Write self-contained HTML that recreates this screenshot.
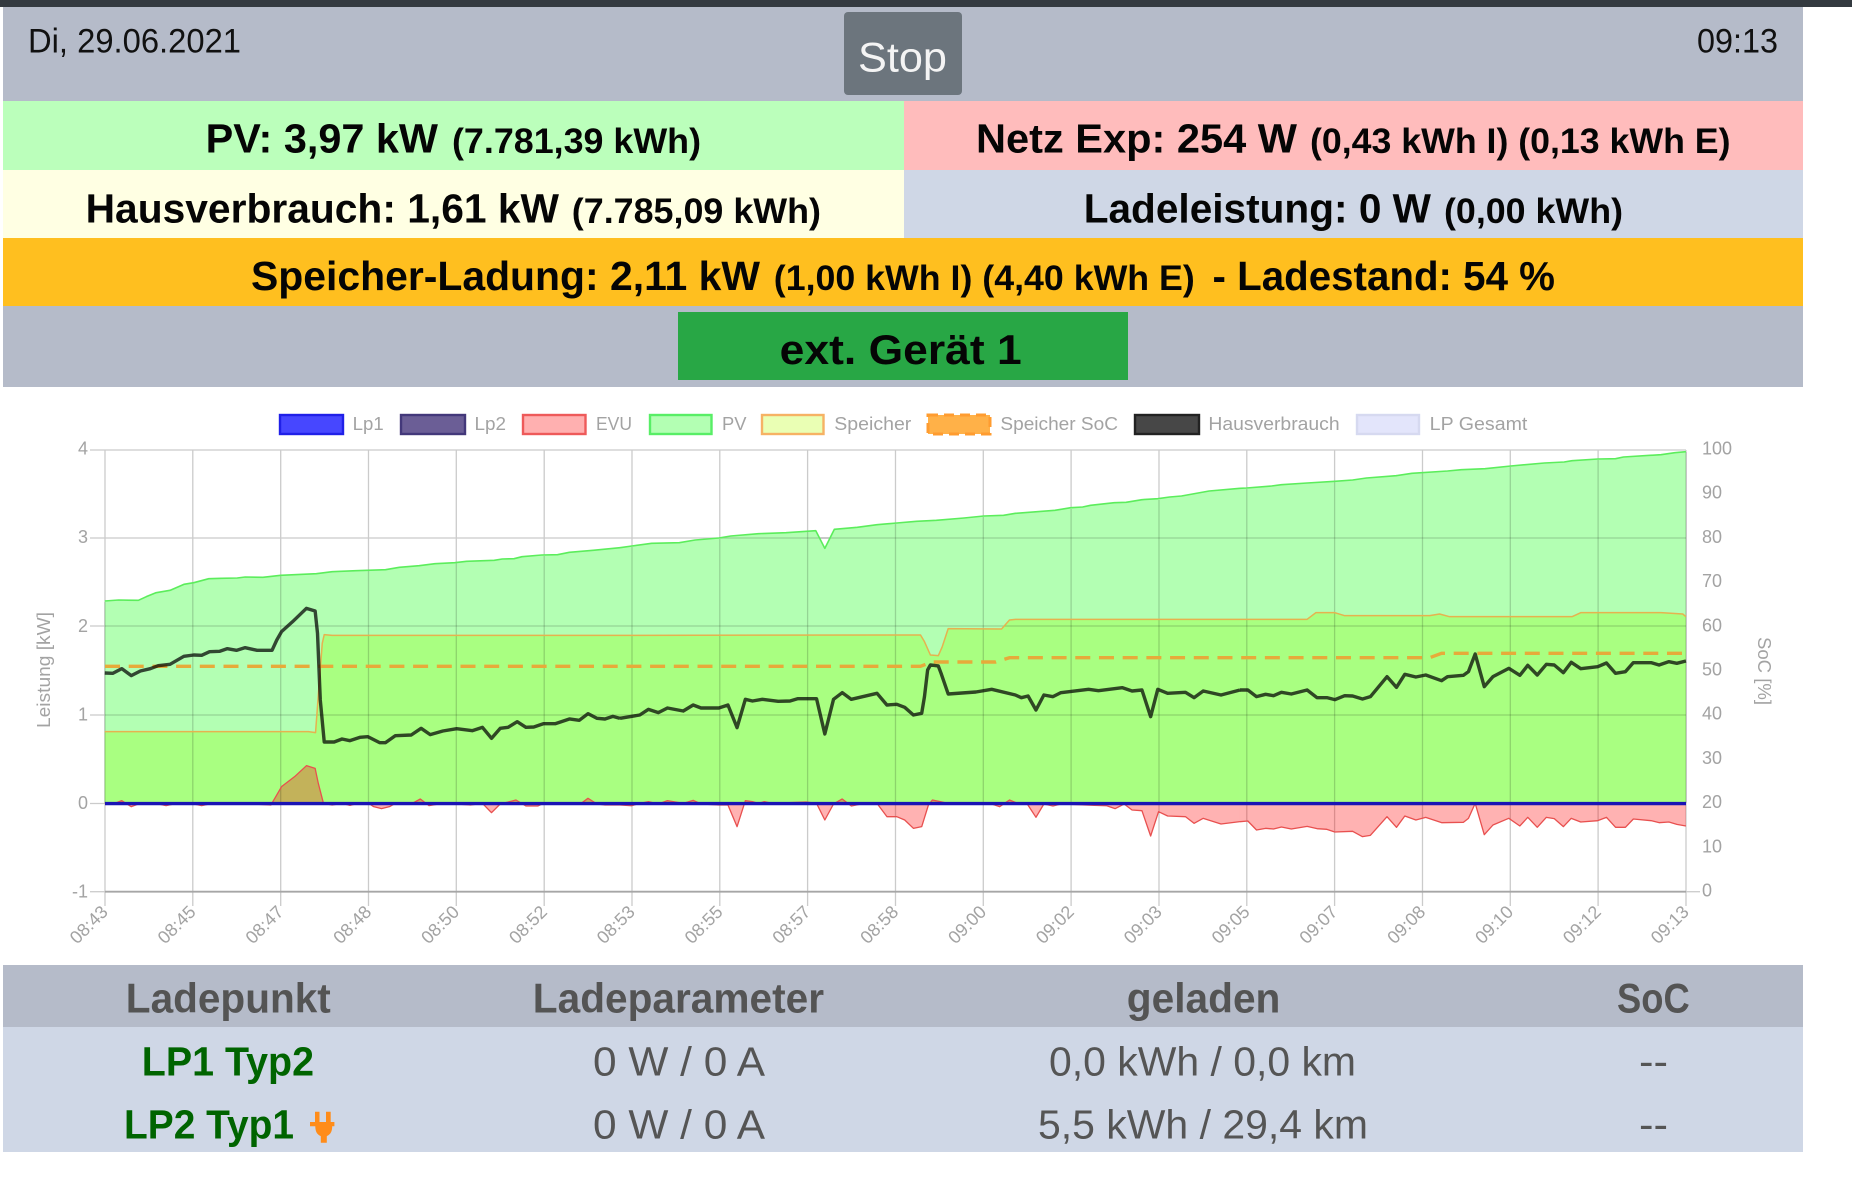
<!DOCTYPE html>
<html lang="de"><head><meta charset="utf-8"><title>Dashboard</title>
<style>
html,body{margin:0;padding:0;background:#fff}
svg{display:block}
text{font-family:"Liberation Sans",sans-serif}
.b{font-weight:700;fill:#050505}
.c{font-size:18px;fill:#a3a3a3}
.h{font-weight:700;fill:#545454;font-size:42px}
.r{fill:#555;font-size:41px}
.g{font-weight:700;fill:#006400;font-size:41px}
.l{vector-effect:non-scaling-stroke;fill:none;stroke-linejoin:round}
.pv{stroke:#5ced5c;stroke-width:1.6}
.sp{stroke:#e6b24f;stroke-width:1.5}
.ha{stroke:rgba(0,0,0,.72);stroke-width:3.4}
.ev{stroke:#e8504f;stroke-width:1.3}
</style></head><body>
<svg xmlns="http://www.w3.org/2000/svg" width="1852" height="1186" viewBox="0 0 1852 1186">
<rect width="1852" height="1186" fill="#fff"/>
<rect width="1852" height="7" fill="#343a40"/>
<rect x="3" y="7" width="1800" height="94" fill="#b5bbc9"/>
<rect x="844" y="12" width="118" height="83" rx="4" fill="#6c757d"/>
<text x="28" y="52.3" font-size="34" fill="#111" textLength="213" lengthAdjust="spacingAndGlyphs">Di, 29.06.2021</text>
<text x="1697" y="52.3" font-size="34" fill="#111" textLength="81" lengthAdjust="spacingAndGlyphs">09:13</text>
<text x="858" y="71.7" font-size="42" fill="#f4f4f4" textLength="89" lengthAdjust="spacingAndGlyphs">Stop</text>

<rect x="3" y="101" width="901" height="69" fill="#bbffbb"/>
<rect x="904" y="101" width="899" height="69" fill="#ffbcbc"/>
<rect x="3" y="170" width="901" height="68" fill="#ffffe3"/>
<rect x="904" y="170" width="899" height="68" fill="#cfd7e6"/>
<rect x="3" y="238" width="1800" height="68" fill="#ffbf1f"/>
<rect x="3" y="306" width="1800" height="81" fill="#b5bbc9"/>
<rect x="678" y="312" width="450" height="68" fill="#28a745"/>

<text class="b" x="205.6" y="152.7" font-size="41" textLength="232.4" lengthAdjust="spacingAndGlyphs">PV: 3,97 kW</text>
<text class="b" x="452" y="153" font-size="35" textLength="249" lengthAdjust="spacingAndGlyphs">(7.781,39 kWh)</text>
<text class="b" x="976" y="152.7" font-size="41" textLength="321" lengthAdjust="spacingAndGlyphs">Netz Exp: 254 W</text>
<text class="b" x="1310" y="153" font-size="35" textLength="420.5" lengthAdjust="spacingAndGlyphs">(0,43 kWh I) (0,13 kWh E)</text>
<text class="b" x="85.6" y="222.7" font-size="41" textLength="473.4" lengthAdjust="spacingAndGlyphs">Hausverbrauch: 1,61 kW</text>
<text class="b" x="571.8" y="223" font-size="35" textLength="249.2" lengthAdjust="spacingAndGlyphs">(7.785,09 kWh)</text>
<text class="b" x="1083.7" y="222.7" font-size="41" textLength="347.3" lengthAdjust="spacingAndGlyphs">Ladeleistung: 0 W</text>
<text class="b" x="1444" y="223" font-size="35" textLength="179" lengthAdjust="spacingAndGlyphs">(0,00 kWh)</text>
<text class="b" x="251" y="290" font-size="41" textLength="509" lengthAdjust="spacingAndGlyphs">Speicher-Ladung: 2,11 kW</text>
<text class="b" x="773.8" y="290" font-size="35" textLength="421" lengthAdjust="spacingAndGlyphs">(1,00 kWh I) (4,40 kWh E)</text>
<text class="b" x="1212.5" y="290" font-size="41" textLength="342.5" lengthAdjust="spacingAndGlyphs">- Ladestand: 54 %</text>
<text class="b" x="779.7" y="364" font-size="42" textLength="242" lengthAdjust="spacingAndGlyphs">ext. Gerät 1</text>

<!-- legend -->
<g stroke-width="2.4">
<rect x="280" y="415" width="63" height="19" fill="#4747ff" stroke="#2020e8"/>
<rect x="401" y="415" width="64" height="19" fill="#6b5e96" stroke="#43387a"/>
<rect x="523" y="415" width="62.5" height="19" fill="#ffb0b0" stroke="#ee5a5a"/>
<rect x="650" y="415" width="61.5" height="19" fill="#b3ffb3" stroke="#58ee66"/>
<rect x="762" y="415" width="61.5" height="19" fill="#eaffb4" stroke="#f6b264"/>
<rect x="928" y="415" width="62" height="19" fill="#ffb148" stroke="#ff9c30" stroke-dasharray="10 6" stroke-width="3"/>
<rect x="1135" y="415" width="64" height="19" fill="#474747" stroke="#222"/>
<rect x="1357" y="415" width="62" height="19" fill="#e3e5fb" stroke="#d6d9f0"/>
</g>
<g>
<text class="c" x="352.7" y="430" textLength="31" lengthAdjust="spacingAndGlyphs">Lp1</text>
<text class="c" x="474.5" y="430" textLength="31.5" lengthAdjust="spacingAndGlyphs">Lp2</text>
<text class="c" x="596" y="430" textLength="36" lengthAdjust="spacingAndGlyphs">EVU</text>
<text class="c" x="722" y="430" textLength="24.5" lengthAdjust="spacingAndGlyphs">PV</text>
<text class="c" x="834.3" y="430" textLength="77" lengthAdjust="spacingAndGlyphs">Speicher</text>
<text class="c" x="1000.4" y="430" textLength="117.6" lengthAdjust="spacingAndGlyphs">Speicher SoC</text>
<text class="c" x="1208.4" y="430" textLength="131.2" lengthAdjust="spacingAndGlyphs">Hausverbrauch</text>
<text class="c" x="1429.7" y="430" textLength="97.7" lengthAdjust="spacingAndGlyphs">LP Gesamt</text>
</g>

<!-- grid under data on white -->
<g stroke="#cbcbcb" stroke-width="1.3">
<path d="M90 450H1686M90 538H1686M90 626H1686M90 715H1686M90 803.5H1686"/>
<path d="M105 450V906M192.8 450V906M280.7 450V906M368.5 450V906M456.3 450V906M544.2 450V906M632 450V906M719.8 450V906M807.6 450V906M895.5 450V906M983.3 450V906M1071.1 450V906M1159 450V906M1246.8 450V906M1334.6 450V906M1422.5 450V906M1510.3 450V906M1598.1 450V906M1686 450V906"/>
<path d="M1686 891.7H1700"/>
<path d="M90 891.7H105"/>
</g>

<!-- fills -->
<g transform="translate(0,400) scale(.39541,.33333)">
<polygon fill="#b3ffb3" points="265,603 300,600 350,601 370,590 395,578 430,571 465,553 490,548 528,536 560,535 600,534 620,531 665,532 710,526 800,521 840,515 900,512 975,509 1010,502 1060,497 1100,491 1150,488 1180,484 1250,481 1270,477 1300,476 1320,470 1370,465 1410,464 1440,457 1500,451 1568,443 1568,1210 265,1210"/>
<polygon fill="#a9ff81" points="265,995 780,995 798,998 806,870 815,730 820,704 840,706 1568,706 1568,1210 265,1210"/>
</g>
<g transform="translate(620,400) scale(.39541,.33333)">
<polygon fill="#b3ffb3" points="0,443 30,438 80,430 150,428 190,420 250,414 280,408 350,401 420,398 495,392 518,445 542,388 600,382 650,374 700,369 750,364 800,361 870,354 920,348 970,346 1000,340 1100,331 1140,323 1170,321 1190,316 1250,308 1280,307 1320,299 1360,296 1390,291 1420,288 1490,273 1568,265 1568,1210 0,1210"/>
<polygon fill="#a9ff81" points="0,706 760,705 770,725 785,765 805,767 815,740 830,686 965,687 985,660 1000,658 1568,658 1568,1210 0,1210"/>
</g>
<g transform="translate(1232,400) scale(.39541,.33333)">
<polygon fill="#b3ffb3" points="20.2,265 37,264 100,258 125,254 190,249 260,244 305,240 340,234 415,227 455,220 545,213 580,209 640,206 705,198 790,189 840,186 860,182 925,177 970,176 990,171 1085,164 1120,158 1148,155 1148,1210 20.2,1210"/>
<polygon fill="#a9ff81" points="20.2,658 190,658 212,638 260,638 285,647 500,647 525,642 550,650 860,650 882,638 1085,638 1140,642 1148,650 1148,1210 20.2,1210"/>
</g>
<g transform="translate(0,690) scale(.39541,.33333)" fill="rgba(255,0,0,.3)">
<polygon points="265,340 295,338 308,332 332,350 350,342 400,342 420,347 440,342 490,342 510,347 530,342 640,342 685,345 695,325 712,290 745,260 775,227 797,235 805,280 818,340 840,345 865,340 885,346 905,340 930,338 945,350 965,356 985,350 1000,340 1040,342 1063,327 1085,347 1110,342 1130,340 1190,345 1220,340 1243,368 1265,342 1305,330 1330,348 1360,348 1375,340 1470,340 1487,325 1510,342 1530,345 1568,345 1568,340"/>
</g>
<g transform="translate(620,690) scale(.39541,.33333)" fill="rgba(255,0,0,.3)">
<polygon points="0,340 0,345 30,347 50,340 72,335 97,342 120,332 160,340 185,331 205,342 250,345 273,345 296,410 317,332 335,335 350,340 365,335 385,340 470,336 497,340 518,390 540,342 562,327 585,348 610,342 650,340 675,380 700,380 720,390 742,415 763,410 780,345 790,330 810,335 830,340 940,342 960,350 985,330 1010,342 1030,342 1052,382 1072,342 1095,348 1115,342 1200,346 1230,347 1252,356 1275,342 1295,360 1320,362 1342,438 1362,365 1385,378 1430,380 1452,400 1475,385 1520,402 1568,395 1568,340"/>
</g>
<g transform="translate(1232,690) scale(.39541,.33333)" fill="rgba(255,0,0,.3)">
<polygon points="20.2,340 20.2,395 40,393 62,420 85,415 105,417 125,411 150,417 190,409 215,416 240,418 260,426 305,424 330,440 350,436 392,380 416,412 437,378 465,390 490,382 530,398 585,397 598,385 615,340 638,434 660,405 700,385 728,408 748,382 772,412 795,382 815,386 838,410 858,385 882,396 925,392 947,382 970,412 995,412 1015,387 1060,392 1080,398 1105,396 1125,403 1148,408 1148,340"/>
</g>

<!-- grid tint over fills, only beneath the PV curve -->
<g stroke="rgba(0,0,0,.17)" stroke-width="1.3">
<path d="M720 538H1686M105 626H1686M105 715H1686"/>
<path d="M105 602V803M192.8 583V803M280.7 576V803M368.5 571V803M456.3 563V803M544.2 556V803M632 547V803M719.8 539V803M807.6 532V803M895.5 524V803M983.3 517V803M1071.1 509V803M1159 500V803M1246.8 489V803M1334.6 482V803M1422.5 473V803M1510.3 467V803M1598.1 460V803M1686 452V803"/>
</g>

<!-- lines -->
<g transform="translate(0,400) scale(.39541,.33333)">
<polyline class="l pv" points="265,603 300,600 350,601 370,590 395,578 430,571 465,553 490,548 528,536 560,535 600,534 620,531 665,532 710,526 800,521 840,515 900,512 975,509 1010,502 1060,497 1100,491 1150,488 1180,484 1250,481 1270,477 1300,476 1320,470 1370,465 1410,464 1440,457 1500,451 1568,443"/>
<polyline class="l sp" points="265,995 780,995 798,998 806,870 815,730 820,704 840,706 1568,706"/>
</g>
<g transform="translate(620,400) scale(.39541,.33333)">
<polyline class="l pv" points="0,443 30,438 80,430 150,428 190,420 250,414 280,408 350,401 420,398 495,392 518,445 542,388 600,382 650,374 700,369 750,364 800,361 870,354 920,348 970,346 1000,340 1100,331 1140,323 1170,321 1190,316 1250,308 1280,307 1320,299 1360,296 1390,291 1420,288 1490,273 1568,265"/>
<polyline class="l sp" points="0,706 760,705 770,725 785,765 805,767 815,740 830,686 965,687 985,660 1000,658 1568,658"/>
</g>
<g transform="translate(1232,400) scale(.39541,.33333)">
<polyline class="l pv" points="20.2,265 37,264 100,258 125,254 190,249 260,244 305,240 340,234 415,227 455,220 545,213 580,209 640,206 705,198 790,189 840,186 860,182 925,177 970,176 990,171 1085,164 1120,158 1148,155"/>
<polyline class="l sp" points="20.2,658 190,658 212,638 260,638 285,647 500,647 525,642 550,650 860,650 882,638 1085,638 1140,642 1148,650"/>
</g>
<path d="M105 666.3H920.5L932 662H995.6L1009.5 657.7H1429.7L1441.6 653.3H1686" fill="none" stroke="#e6ab3a" stroke-width="3.4" stroke-dasharray="15 8.7"/>
<g transform="translate(0,690) scale(.39541,.33333)">
<polyline class="l ev" points="265,340 295,338 308,332 332,350 350,342 400,342 420,347 440,342 490,342 510,347 530,342 640,342 685,345 695,325 712,290 745,260 775,227 797,235 805,280 818,340 840,345 865,340 885,346 905,340 930,338 945,350 965,356 985,350 1000,340 1040,342 1063,327 1085,347 1110,342 1130,340 1190,345 1220,340 1243,368 1265,342 1305,330 1330,348 1360,348 1375,340 1470,340 1487,325 1510,342 1530,345 1568,345"/>
</g>
<g transform="translate(620,690) scale(.39541,.33333)">
<polyline class="l ev" points="0,345 30,347 50,340 72,335 97,342 120,332 160,340 185,331 205,342 250,345 273,345 296,410 317,332 335,335 350,340 365,335 385,340 470,336 497,340 518,390 540,342 562,327 585,348 610,342 650,340 675,380 700,380 720,390 742,415 763,410 780,345 790,330 810,335 830,340 940,342 960,350 985,330 1010,342 1030,342 1052,382 1072,342 1095,348 1115,342 1200,346 1230,347 1252,356 1275,342 1295,360 1320,362 1342,438 1362,365 1385,378 1430,380 1452,400 1475,385 1520,402 1568,395"/>
</g>
<g transform="translate(1232,690) scale(.39541,.33333)">
<polyline class="l ev" points="20.2,395 40,393 62,420 85,415 105,417 125,411 150,417 190,409 215,416 240,418 260,426 305,424 330,440 350,436 392,380 416,412 437,378 465,390 490,382 530,398 585,397 598,385 615,340 638,434 660,405 700,385 728,408 748,382 772,412 795,382 815,386 838,410 858,385 882,396 925,392 947,382 970,412 995,412 1015,387 1060,392 1080,398 1105,396 1125,403 1148,408"/>
</g>
<path d="M105 803.6H1686" stroke="#1a14b4" stroke-width="3.4"/>
<g transform="translate(0,400) scale(.39541,.33333)">
<polyline class="l ha" points="265,819 285,820 308,806 332,827 355,813 380,806 400,797 430,793 465,769 490,765 510,766 530,755 555,754 575,746 598,751 620,743 650,751 688,751 700,720 712,695 740,665 775,625 797,633 803,700 810,900 820,1026 845,1026 865,1017 885,1022 910,1012 930,1010 960,1028 975,1028 1000,1007 1040,1005 1065,985 1088,1004 1120,993 1155,986 1195,992 1220,982 1243,1015 1265,985 1285,982 1308,965 1330,982 1350,981 1375,971 1405,971 1440,957 1465,961 1487,941 1510,955 1530,957 1550,949 1568,955"/>
</g>
<g transform="translate(620,400) scale(.39541,.33333)">
<polyline class="l ha" points="0,955 50,945 72,928 97,938 120,924 160,933 185,915 205,924 250,924 273,915 296,983 317,898 335,903 360,898 400,904 430,903 450,896 497,896 518,1002 540,898 562,878 585,898 650,880 675,915 700,913 720,922 742,945 763,940 770,890 778,810 785,795 805,798 812,820 830,882 900,876 940,868 1000,885 1015,893 1032,888 1052,930 1072,885 1095,890 1115,878 1185,868 1210,872 1270,863 1295,873 1320,870 1342,950 1360,868 1385,880 1430,877 1452,893 1475,873 1520,885 1568,870"/>
</g>
<g transform="translate(1232,400) scale(.39541,.33333)">
<polyline class="l ha" points="20.2,870 40,870 62,890 85,883 105,887 125,877 150,882 190,870 215,893 240,893 260,899 285,887 305,888 330,897 350,890 392,830 416,862 437,823 465,831 490,825 530,842 545,830 585,826 598,815 615,762 638,860 660,830 700,805 728,826 748,796 772,825 795,793 815,795 838,818 858,787 882,806 925,800 947,789 970,820 995,815 1015,788 1060,788 1080,795 1105,785 1125,790 1148,783"/>
</g>
<path d="M105 891.7H1686" stroke="#a6a6a6" stroke-width="1.8"/>

<!-- axis labels -->
<g text-anchor="end">
<text class="c" x="88" y="454.5">4</text>
<text class="c" x="88" y="543">3</text>
<text class="c" x="88" y="632">2</text>
<text class="c" x="88" y="720.5">1</text>
<text class="c" x="88" y="809">0</text>
<text class="c" x="88" y="897.5">-1</text>
</g>
<g>
<text class="c" x="1702" y="454.5">100</text>
<text class="c" x="1702" y="498.7">90</text>
<text class="c" x="1702" y="542.9">80</text>
<text class="c" x="1702" y="587.1">70</text>
<text class="c" x="1702" y="631.3">60</text>
<text class="c" x="1702" y="675.5">50</text>
<text class="c" x="1702" y="719.7">40</text>
<text class="c" x="1702" y="763.9">30</text>
<text class="c" x="1702" y="808.1">20</text>
<text class="c" x="1702" y="852.3">10</text>
<text class="c" x="1702" y="896.5">0</text>
</g>
<text class="c" transform="translate(50,728) rotate(-90)" textLength="116" lengthAdjust="spacingAndGlyphs">Leistung [kW]</text>
<text class="c" transform="translate(1758,637) rotate(90)" textLength="68" lengthAdjust="spacingAndGlyphs">SoC [%]</text>
<g text-anchor="end">
<text class="c" transform="translate(109,913) rotate(-45)">08:43</text>
<text class="c" transform="translate(196.8,913) rotate(-45)">08:45</text>
<text class="c" transform="translate(284.7,913) rotate(-45)">08:47</text>
<text class="c" transform="translate(372.5,913) rotate(-45)">08:48</text>
<text class="c" transform="translate(460.3,913) rotate(-45)">08:50</text>
<text class="c" transform="translate(548.2,913) rotate(-45)">08:52</text>
<text class="c" transform="translate(636,913) rotate(-45)">08:53</text>
<text class="c" transform="translate(723.8,913) rotate(-45)">08:55</text>
<text class="c" transform="translate(811.6,913) rotate(-45)">08:57</text>
<text class="c" transform="translate(899.5,913) rotate(-45)">08:58</text>
<text class="c" transform="translate(987.3,913) rotate(-45)">09:00</text>
<text class="c" transform="translate(1075.1,913) rotate(-45)">09:02</text>
<text class="c" transform="translate(1163,913) rotate(-45)">09:03</text>
<text class="c" transform="translate(1250.8,913) rotate(-45)">09:05</text>
<text class="c" transform="translate(1338.6,913) rotate(-45)">09:07</text>
<text class="c" transform="translate(1426.5,913) rotate(-45)">09:08</text>
<text class="c" transform="translate(1514.3,913) rotate(-45)">09:10</text>
<text class="c" transform="translate(1602.1,913) rotate(-45)">09:12</text>
<text class="c" transform="translate(1690,913) rotate(-45)">09:13</text>
</g>

<!-- table -->
<rect x="3" y="965" width="1800" height="62" fill="#b5bbc9"/>
<rect x="3" y="1027" width="1800" height="125" fill="#cfd7e6"/>
<text class="h" x="125.8" y="1012.7" textLength="205" lengthAdjust="spacingAndGlyphs">Ladepunkt</text>
<text class="h" x="532.8" y="1012.7" textLength="291.2" lengthAdjust="spacingAndGlyphs">Ladeparameter</text>
<text class="h" x="1126.8" y="1012.7" textLength="153.6" lengthAdjust="spacingAndGlyphs">geladen</text>
<text class="h" x="1617" y="1012.7" textLength="72.7" lengthAdjust="spacingAndGlyphs">SoC</text>
<text class="g" x="141.8" y="1075.7" textLength="172.2" lengthAdjust="spacingAndGlyphs">LP1 Typ2</text>
<text class="r" x="593" y="1075.7" textLength="172" lengthAdjust="spacingAndGlyphs">0 W / 0 A</text>
<text class="r" x="1049" y="1075.7" textLength="307" lengthAdjust="spacingAndGlyphs">0,0 kWh / 0,0 km</text>
<text class="r" x="1639" y="1075.7" textLength="29" lengthAdjust="spacingAndGlyphs">--</text>
<text class="g" x="124" y="1138.3" textLength="170" lengthAdjust="spacingAndGlyphs">LP2 Typ1</text>
<path fill="#ff8c1a" d="M315 1111.7h4.5V1122H315zM326 1111.7h4.7V1122H326zM310 1122h24.4v4.2h-2.2c0 5-1.6 8-5 9.7l-.4.4v6.4h-6v-6.4l-.5-.4c-3.4-1.7-5-4.7-5-9.7H310z"/>
<text class="r" x="593" y="1138.3" textLength="172" lengthAdjust="spacingAndGlyphs">0 W / 0 A</text>
<text class="r" x="1038" y="1138.3" textLength="330" lengthAdjust="spacingAndGlyphs">5,5 kWh / 29,4 km</text>
<text class="r" x="1639" y="1138.3" textLength="29" lengthAdjust="spacingAndGlyphs">--</text>
</svg>
</body></html>
